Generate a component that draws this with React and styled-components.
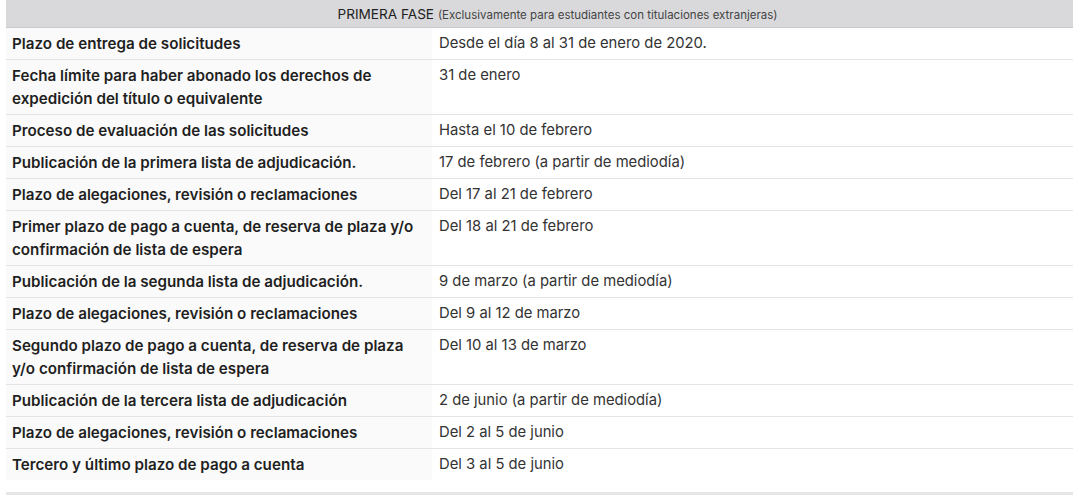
import React from "react";
import styled, { createGlobalStyle } from "styled-components";

const Global = createGlobalStyle`
  html, body { margin: 0; padding: 0; background: #fff; }
  body { font-family: Inter, "Liberation Sans", Arial, sans-serif; }
`;

const Wrap = styled.div`
  width: 1067px;
  margin-left: 6px;
  border-bottom: 3px solid #e6e6e6;
  padding-bottom: 12px;
`;

const Table = styled.table`
  width: 100%;
  border-collapse: collapse;
  table-layout: fixed;
  font-size: 14.8px;
  color: #333;
`;

const HeadCell = styled.th`
  background: #d9d9db;
  height: 27px;
  padding: 0 0 0 36px;
  text-align: center;
  font-weight: normal;
  font-size: 13.6px;
  color: #222;
  vertical-align: middle;
  border-bottom: 1px solid #c9c9cb;
`;

const Small = styled.span`
  font-size: 11.5px;
  color: #444;
`;

const Row = styled.tr`
  border-top: ${(p) => (p.$first ? "none" : "1px solid #e4e4e4")};
`;

const Label = styled.td`
  background: #fafafa;
  padding: 4px 6px 4px 6px;
  line-height: 23px;
  font-weight: 600;
  font-size: 15.2px;
  color: #1f1f1f;
  vertical-align: top;
`;

const Value = styled.td`
  padding: 4px 6px 4px 7px;
  line-height: 23px;
  color: #333;
  vertical-align: top;
`;

const rows = [
  ["Plazo de entrega de solicitudes", "Desde el día 8 al 31 de enero de 2020."],
  ["Fecha límite para haber abonado los derechos de expedición del título o equivalente", "31 de enero"],
  ["Proceso de evaluación de las solicitudes", "Hasta el 10 de febrero"],
  ["Publicación de la primera lista de adjudicación.", "17 de febrero (a partir de mediodía)"],
  ["Plazo de alegaciones, revisión o reclamaciones", "Del 17 al 21 de febrero"],
  ["Primer plazo de pago a cuenta, de reserva de plaza y/o confirmación de lista de espera", "Del 18 al 21 de febrero"],
  ["Publicación de la segunda lista de adjudicación.", "9 de marzo (a partir de mediodía)"],
  ["Plazo de alegaciones, revisión o reclamaciones", "Del 9 al 12 de marzo"],
  ["Segundo plazo de pago a cuenta, de reserva de plaza y/o confirmación de lista de espera", "Del 10 al 13 de marzo"],
  ["Publicación de la tercera lista de adjudicación", "2 de junio (a partir de mediodía)"],
  ["Plazo de alegaciones, revisión o reclamaciones", "Del 2 al 5 de junio"],
  ["Tercero y último plazo de pago a cuenta", "Del 3 al 5 de junio"],
];

export default function App() {
  return (
    <>
      <Global />
      <Wrap>
        <Table>
          <colgroup>
            <col style={{ width: "426px" }} />
            <col />
          </colgroup>
          <thead>
            <tr>
              <HeadCell colSpan={2}>
                PRIMERA FASE <Small>(Exclusivamente para estudiantes con titulaciones extranjeras)</Small>
              </HeadCell>
            </tr>
          </thead>
          <tbody>
            {rows.map(([a, b], i) => (
              <Row key={i} $first={i === 0}>
                <Label>{a}</Label>
                <Value>{b}</Value>
              </Row>
            ))}
          </tbody>
        </Table>
      </Wrap>
    </>
  );
}
